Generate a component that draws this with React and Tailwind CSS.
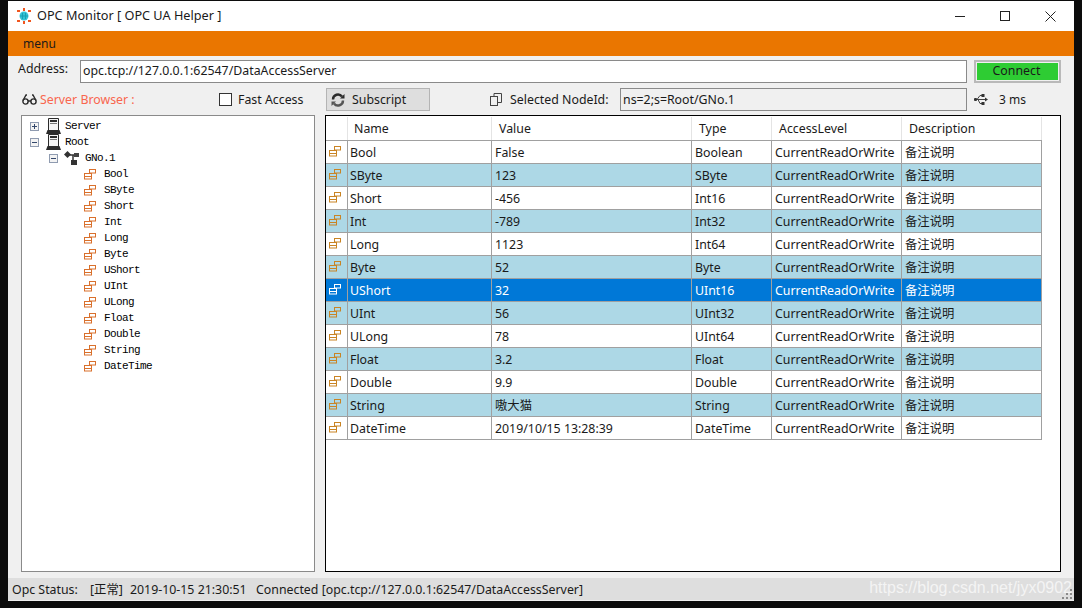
const uiFont = { fontFamily: '"Noto Sans", "Noto Sans CJK SC", sans-serif' };

const nodes = [
  ["Bool", "False", "Boolean"],
  ["SByte", "123", "SByte"],
  ["Short", "-456", "Int16"],
  ["Int", "-789", "Int32"],
  ["Long", "1123", "Int64"],
  ["Byte", "52", "Byte"],
  ["UShort", "32", "UInt16"],
  ["UInt", "56", "UInt32"],
  ["ULong", "78", "UInt64"],
  ["Float", "3.2", "Float"],
  ["Double", "9.9", "Double"],
  ["String", "嗷大猫", "String"],
  ["DateTime", "2019/10/15 13:28:39", "DateTime"],
];

const GRID = "grid w-[716px] grid-cols-[22px_144px_200px_80px_130px_140px]";

function NodeIcon({ color = "#d9702c", fill = "none" }) {
  return (
    <svg width="12" height="11" viewBox="0 0 12 11" className="shrink-0" aria-hidden="true">
      <rect x="5.5" y="0.5" width="6" height="3.5" fill={fill} stroke={color} />
      <rect x="0.5" y="4.5" width="7" height="5.5" fill={fill} stroke={color} />
      <path d="M1 7.5H7" stroke={color} />
    </svg>
  );
}

function ServerIcon() {
  return (
    <svg width="15" height="16" viewBox="0 0 15 16" aria-hidden="true">
      <path d="M2.5 0.5H12.5V12.5H2.5Z" fill="#f4f4f4" stroke="#2b2b2b" />
      <rect x="4" y="2" width="7" height="2" fill="#2b2b2b" />
      <rect x="4" y="5" width="7" height="1" fill="#777" />
      <path d="M0 16L1.5 12H13.5L15 16Z" fill="#2b2b2b" />
    </svg>
  );
}

function GroupIcon() {
  return (
    <svg width="15" height="14" viewBox="0 0 15 14" aria-hidden="true">
      <path d="M0 3.5L3.5 0L7 3.5L3.5 7Z" fill="#333" />
      <path d="M5 4H11M9 4V11" stroke="#333" strokeWidth="1.5" />
      <rect x="10" y="2" width="5" height="4" fill="#444" />
      <rect x="7" y="9" width="6" height="5" fill="#333" />
    </svg>
  );
}

function Expander({ open }) {
  return (
    <span className="relative flex h-[9px] w-[9px] shrink-0 items-center justify-center border border-[#8f9bb0] bg-[#f3f3f3]">
      <span className="h-px w-[5px] bg-[#33476b]" />
      {!open && <span className="absolute h-[5px] w-px bg-[#33476b]" />}
    </span>
  );
}

function TreeRow({ pad, children }) {
  return (
    <div className={`flex h-4 items-center ${pad}`}>{children}</div>
  );
}

function Logo() {
  return (
    <svg width="16" height="16" viewBox="0 0 16 16" aria-hidden="true">
      <circle cx="8" cy="8" r="4.5" fill="#35c4d6" />
      <path d="M6.5 5V11M9.5 5V11M4 8H12" stroke="#1b9fb3" />
      <g fill="#f0561f">
        <rect x="7" y="0" width="2" height="3" />
        <rect x="7" y="13" width="2" height="3" />
        <rect x="1" y="2" width="3" height="2" />
        <rect x="12" y="2" width="3" height="2" />
        <rect x="1" y="12" width="3" height="2" />
        <rect x="12" y="12" width="3" height="2" />
      </g>
    </svg>
  );
}

function GlassesIcon() {
  return (
    <svg width="15" height="11" viewBox="0 0 15 11" fill="none" stroke="#2b2b2b" strokeWidth="1.4" aria-hidden="true">
      <circle cx="3.5" cy="7.5" r="2.6" />
      <circle cx="11.5" cy="7.5" r="2.6" />
      <path d="M6 7H9M1 6.5L4 1H5M14 6.5L11 1H10" />
    </svg>
  );
}

function RefreshIcon() {
  return (
    <svg width="14" height="14" viewBox="0 0 14 14" fill="none" aria-hidden="true">
      <path d="M2 6.5A5 5 0 0 1 11 3.5" stroke="#2b2b2b" strokeWidth="2.4" />
      <path d="M12 7.5A5 5 0 0 1 3 10.5" stroke="#555" strokeWidth="2.4" />
      <path d="M9 5.5H13.5V1Z" fill="#2b2b2b" />
      <path d="M5 8.5H0.5V13Z" fill="#555" />
    </svg>
  );
}

function CopyIcon() {
  return (
    <svg width="12" height="13" viewBox="0 0 12 13" fill="none" stroke="#444" aria-hidden="true">
      <rect x="0.5" y="3.5" width="7" height="9" />
      <path d="M4 3V0.5H11.5V9.5H8" />
    </svg>
  );
}

function UsbIcon() {
  return (
    <svg width="14" height="11" viewBox="0 0 14 11" fill="none" aria-hidden="true">
      <path d="M1 5.5H12" stroke="#444" />
      <path d="M3 5.5L6 1.5H8M4 5.5L6 9.5H8" stroke="#444" />
      <rect x="0" y="4" width="3" height="3" rx="1" fill="#333" />
      <rect x="7.5" y="0" width="3" height="3" fill="#333" />
      <rect x="7.5" y="8" width="3" height="3" fill="#333" />
      <path d="M11 3.5L14 5.5L11 7.5Z" fill="#333" />
    </svg>
  );
}

function GripIcon() {
  return (
    <svg width="11" height="11" viewBox="0 0 11 11" fill="#8a8a8a" aria-hidden="true">
      <rect x="8" y="0" width="2" height="2" />
      <rect x="4" y="4" width="2" height="2" />
      <rect x="8" y="4" width="2" height="2" />
      <rect x="0" y="8" width="2" height="2" />
      <rect x="4" y="8" width="2" height="2" />
      <rect x="8" y="8" width="2" height="2" />
    </svg>
  );
}

export default function App() {
  return (
    <div className="h-[608px] w-[1082px] overflow-hidden bg-[#0c0c0c] pl-2 pt-px text-[12.35px] text-[#1a1a1a]" style={uiFont}>
      <div className="relative flex h-[600px] w-[1066px] flex-col bg-[#f0f0f0]">
        {/* title bar */}
        <div className="flex h-[30px] items-center bg-white pl-2">
          <Logo />
          <span className="ml-[5px] text-[12.7px]">OPC Monitor [ OPC UA Helper ]</span>
          <div className="ml-auto flex items-center">
            <span className="h-px w-[10px] bg-[#222]" />
            <span className="ml-[35px] h-[10px] w-[10px] border border-[#222]" />
            <svg width="11" height="11" viewBox="0 0 11 11" className="ml-[35px] mr-[18px]" stroke="#222" aria-hidden="true">
              <path d="M0.5 0.5L10.5 10.5M10.5 0.5L0.5 10.5" />
            </svg>
          </div>
        </div>

        {/* menu */}
        <div className="flex h-[25px] items-center bg-[#ea7600] pl-[15px] text-[12px]">menu</div>

        {/* address row */}
        <div className="flex h-[31px] items-center pb-px pl-[10px]">
          <span className="w-[62px] pb-[3px]">Address:</span>
          <div className="flex h-[23px] w-[887px] items-center border border-[#8a8a8a] bg-white pl-[2px]">
            opc.tcp://127.0.0.1:62547/DataAccessServer
          </div>
          <div className="ml-[7px] h-[23px] w-[87px] border-2 border-[#b9b9b9] bg-[#f0f0f0] p-px">
            <div className="flex h-[17px] items-center justify-center pr-[2px] bg-[#2ecc33]">Connect</div>
          </div>
        </div>

        {/* toolbar row */}
        <div className="flex h-[28px] items-center pb-[3px] pl-[14px]">
          <GlassesIcon />
          <span className="ml-[3px] w-[179px] pt-[2px] text-[#f9664e]">Server Browser :</span>
          <span className="h-[13px] w-[13px] border border-[#333] bg-white" />
          <span className="ml-[6px] w-[66px] pt-[2px]">Fast Access</span>
          <div className="ml-[22px] flex h-[23px] w-[104px] items-center border border-[#b4b4b4] bg-[#dedede] pl-[4px]">
            <RefreshIcon />
            <span className="ml-[7px] pt-[2px]">Subscript</span>
          </div>
          <span className="ml-[60px]"><CopyIcon /></span>
          <span className="ml-[8px] w-[110px] pt-[2px]">Selected NodeId:</span>
          <div className="flex h-[23px] w-[347px] items-center border border-[#8a8a8a] bg-[#f0f0f0] pl-[2px] pt-[2px]">
            ns=2;s=Root/GNo.1
          </div>
          <span className="ml-[7px]"><UsbIcon /></span>
          <span className="ml-[11px] text-[12px]">3 ms</span>
        </div>

        {/* panels */}
        <div className="flex h-[457px] pl-[13px]">
          <div className="h-full w-[294px] border border-[#8a8a8a] bg-white pt-[2px] text-[11px] tracking-[-0.6px] text-black" style={{ fontFamily: '"Liberation Mono", monospace' }}>
            <TreeRow pad="pl-[8px]">
              <Expander />
              <span className="ml-[7px]"><ServerIcon /></span>
              <span className="ml-[4px]">Server</span>
            </TreeRow>
            <TreeRow pad="pl-[8px]">
              <Expander open />
              <span className="ml-[7px]"><ServerIcon /></span>
              <span className="ml-[4px]">Root</span>
            </TreeRow>
            <TreeRow pad="pl-[27px]">
              <Expander open />
              <span className="ml-[6px]"><GroupIcon /></span>
              <span className="ml-[6px]">GNo.1</span>
            </TreeRow>
            {nodes.map((n) => (
              <TreeRow key={n[0]} pad="pl-[62px]">
                <NodeIcon />
                <span className="ml-[8px]">{n[0]}</span>
              </TreeRow>
            ))}
          </div>

          <div className="ml-[10px] h-full w-[736px] border border-black bg-white pt-px">
            <div className={`${GRID} h-[24px] border-b border-[#a0a0a0]`}>
              <span className="border-r border-[#e4e4e4]" />
              {["Name", "Value", "Type", "AccessLevel", "Description"].map((h, i) => (
                <span key={h} className={`flex items-center border-r border-[#e4e4e4] pt-px ${i === 0 ? "pl-[6px]" : "pl-[7px]"}`}>{h}</span>
              ))}
            </div>
            {nodes.map((n, i) => {
              const selected = n[0] === "UShort";
              const tone = selected
                ? "bg-[#0078d7] text-white"
                : i % 2 === 1 || n[0] === "UInt" ? "bg-[#add8e6]" : "bg-white";
              const cell = "flex items-center border-r border-b border-[#a0a0a0] pl-[3px] pt-[2px]";
              return (
                <div key={n[0]} className={`${GRID} h-[23px] ${tone}`}>
                  <span className="flex items-center border-r border-b border-[#a0a0a0] pl-[3px] pb-[2px]">
                    <NodeIcon color={selected ? "#ffffff" : "#c98424"} fill={selected ? "#0078d7" : "none"} />
                  </span>
                  <span className={`${cell} !pl-[2px]`}>{n[0]}</span>
                  <span className={cell}>{n[1]}</span>
                  <span className={cell}>{n[2]}</span>
                  <span className={cell}>CurrentReadOrWrite</span>
                  <span className={cell}>备注说明</span>
                </div>
              );
            })}
          </div>
        </div>

        {/* status bar */}
        <div className="mt-[6px] flex h-[22px] items-center bg-[#dedede] pl-[4px] pt-[2px]">
          <span className="w-[78px]">Opc Status:</span>
          <span className="w-[40px]">[正常]</span>
          <span className="w-[126px]">2019-10-15 21:30:51</span>
          <span>Connected [opc.tcp://127.0.0.1:62547/DataAccessServer]</span>
        </div>

        {/* watermark and grip sit over the status bar */}
        <span className="absolute bottom-[1px] right-[2px] text-[16px] text-[#f4f4f4]" style={{ fontFamily: '"Liberation Sans", sans-serif' }}>
          https://blog.csdn.net/jyx0902
        </span>
        <span className="absolute bottom-[1px] right-[1px] flex"><GripIcon /></span>
      </div>
    </div>
  );
}
